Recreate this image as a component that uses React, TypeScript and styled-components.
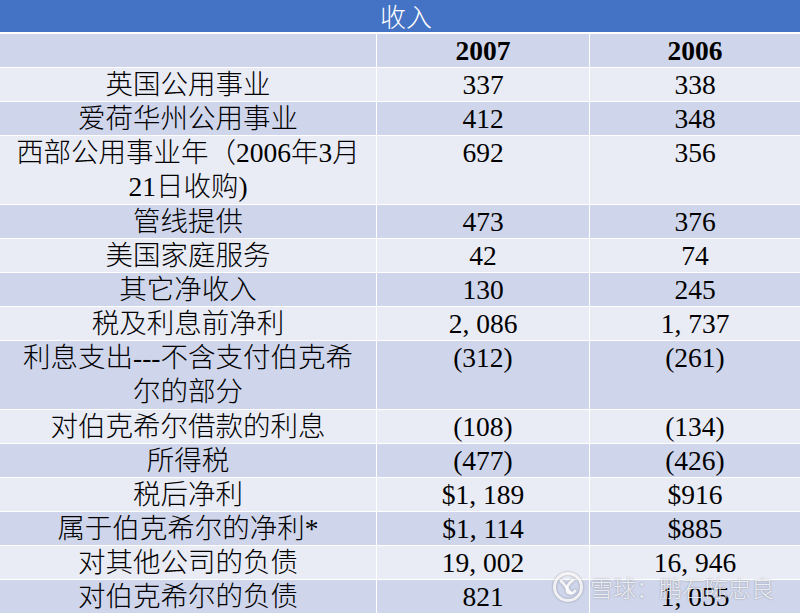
import React from 'react';
import styled, { createGlobalStyle } from 'styled-components';

const GlobalStyle = createGlobalStyle`
  html, body {
    margin: 0;
    padding: 0;
    background: #ffffff;
  }
`;

interface Row {
  label: string;
  y2007: string;
  y2006: string;
  tall?: boolean;
}

const rows: Row[] = [
  { label: '英国公用事业', y2007: '337', y2006: '338' },
  { label: '爱荷华州公用事业', y2007: '412', y2006: '348' },
  { label: '西部公用事业年（2006年3月21日收购)', y2007: '692', y2006: '356', tall: true },
  { label: '管线提供', y2007: '473', y2006: '376' },
  { label: '美国家庭服务', y2007: '42', y2006: '74' },
  { label: '其它净收入', y2007: '130', y2006: '245' },
  { label: '税及利息前净利', y2007: '2, 086', y2006: '1, 737' },
  { label: '利息支出---不含支付伯克希尔的部分', y2007: '(312)', y2006: '(261)', tall: true },
  { label: '对伯克希尔借款的利息', y2007: '(108)', y2006: '(134)' },
  { label: '所得税', y2007: '(477)', y2006: '(426)' },
  { label: '税后净利', y2007: '$1, 189', y2006: '$916' },
  { label: '属于伯克希尔的净利*', y2007: '$1, 114', y2006: '$885' },
  { label: '对其他公司的负债', y2007: '19, 002', y2006: '16, 946' },
  { label: '对伯克希尔的负债', y2007: '821', y2006: '1, 055' },
];

const Page = styled.div`
  position: relative;
  width: 800px;
  height: 613px;
  overflow: hidden;
`;

const Sheet = styled.div`
  display: grid;
  grid-template-columns: 376px 212px 210px;
  gap: 1px;
  background: #ffffff;
`;

const TitleBar = styled.div`
  grid-column: 1 / -1;
  height: 32px;
  margin-bottom: 1px;
  display: flex;
  align-items: center;
  justify-content: center;
  padding-left: 12px;
  background: #4472c4;
`;

const TitleText = styled.span`
  display: inline-block;
  color: #ffffff;
  font-family: 'Noto Sans CJK SC', sans-serif;
  font-size: 26px;
  font-weight: 300;
  line-height: 26px;
  height: 26px;
  overflow: visible;
`;

const Cell = styled.div<{ $dark: boolean; $tall?: boolean; $bold?: boolean }>`
  height: ${(p) => (p.$tall ? '68px' : '33px')};
  padding: 0 12px;
  background: ${(p) => (p.$dark ? '#cfd5ea' : '#e9ebf5')};
  color: #000000;
  font-family: 'Liberation Serif', 'Noto Sans CJK SC', serif;
  font-size: 27.5px;
  font-weight: ${(p) => (p.$bold ? 700 : 300)};
  line-height: 34px;
  text-align: center;
  overflow: hidden;
`;

const Watermark = styled.div`
  position: absolute;
  right: 26px;
  bottom: 10px;
  display: flex;
  align-items: center;
  gap: 6px;
  color: rgba(255, 255, 255, 0.8);
  font-family: 'Noto Sans CJK SC', sans-serif;
  font-size: 23px;
  font-weight: 300;
  line-height: 30px;
  text-shadow: 0 0 2px rgba(0, 0, 0, 0.35);
`;

const Logo = styled.svg`
  width: 32px;
  height: 32px;
  filter: drop-shadow(0 0 1px rgba(0, 0, 0, 0.35));
`;

export default function App() {
  return (
    <Page>
      <GlobalStyle />
      <Sheet>
        <TitleBar>
          <TitleText>收入</TitleText>
        </TitleBar>
        <Cell $dark />
        <Cell $dark $bold>2007</Cell>
        <Cell $dark $bold>2006</Cell>
        {rows.map((r, i) => {
          const dark = i % 2 === 1;
          return (
            <React.Fragment key={r.label}>
              <Cell $dark={dark} $tall={r.tall}>{r.label}</Cell>
              <Cell $dark={dark} $tall={r.tall}>{r.y2007}</Cell>
              <Cell $dark={dark} $tall={r.tall}>{r.y2006}</Cell>
            </React.Fragment>
          );
        })}
      </Sheet>
      <Watermark>
        <Logo viewBox="0 0 32 32" fill="none" stroke="rgba(255,255,255,0.85)" strokeWidth="3" strokeLinecap="round">
          <circle cx="16" cy="16" r="13.5" />
          <path d="M9 10 C13 13 15 18 19 22" />
          <path d="M21 9 C16 13 14 17 15 20 C16 23 21 23 23 20" />
        </Logo>
        <span>雪球：鹏石陈忠良</span>
      </Watermark>
    </Page>
  );
}
